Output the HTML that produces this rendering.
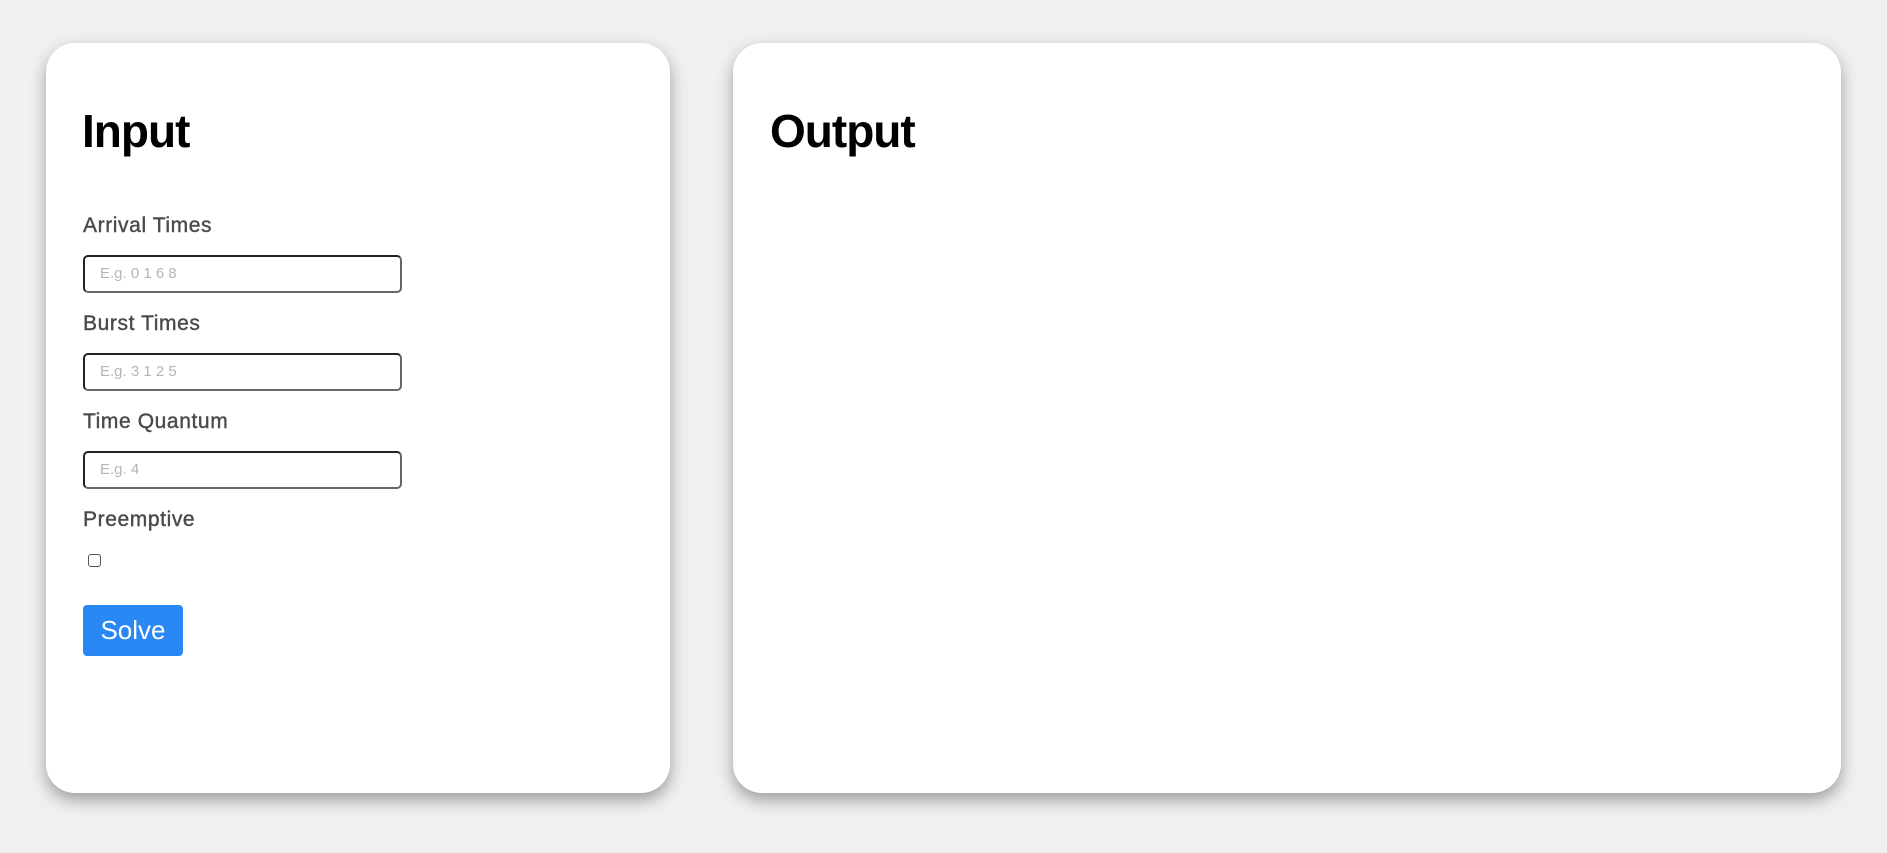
<!DOCTYPE html>
<html><head><style>
body{margin:0;background:#f0f0f0;width:1887px;height:853px;overflow:hidden;font-family:"Liberation Sans",sans-serif;position:relative}
.card{position:absolute;top:43px;height:750px;background:#fff;border-radius:29px;box-shadow:0 7px 16px rgba(0,0,0,.35)}
h1{position:absolute;margin:0;font-size:46px;font-weight:bold;color:#000;top:104px;letter-spacing:-1px}
.lab{position:absolute;left:83px;font-size:21px;color:#4a4a4a;letter-spacing:.6px;-webkit-text-stroke:0.4px #4a4a4a}
.inp{position:absolute;left:83px;width:315px;height:34px;border:2px solid #222;border-radius:5px;border-bottom-color:#666;border-right-color:#666;font-size:15px;color:#b5b5b5;line-height:34px;box-sizing:content-box;padding-left:0}
.inp span{margin-left:15px}
</style></head><body>
<div class="card" style="left:46px;width:624px"></div>
<div class="card" style="left:733px;width:1108px"></div>
<h1 style="left:82px">Input</h1>
<h1 style="left:770px">Output</h1>
<div class="lab" style="top:214px">Arrival Times</div>
<div class="inp" style="top:255px"><span>E.g. 0 1 6 8</span></div>
<div class="lab" style="top:312px">Burst Times</div>
<div class="inp" style="top:353px"><span>E.g. 3 1 2 5</span></div>
<div class="lab" style="top:410px">Time Quantum</div>
<div class="inp" style="top:451px"><span>E.g. 4</span></div>
<div class="lab" style="top:508px">Preemptive</div>
<div style="position:absolute;left:88px;top:554px;width:11px;height:11px;border:1.5px solid #555;border-radius:3px"></div>
<div style="position:absolute;left:83px;top:605px;width:100px;height:51px;background:#2a88f5;border-radius:4px;color:#fff;font-size:26px;line-height:51px;text-align:center">Solve</div>
</body></html>
